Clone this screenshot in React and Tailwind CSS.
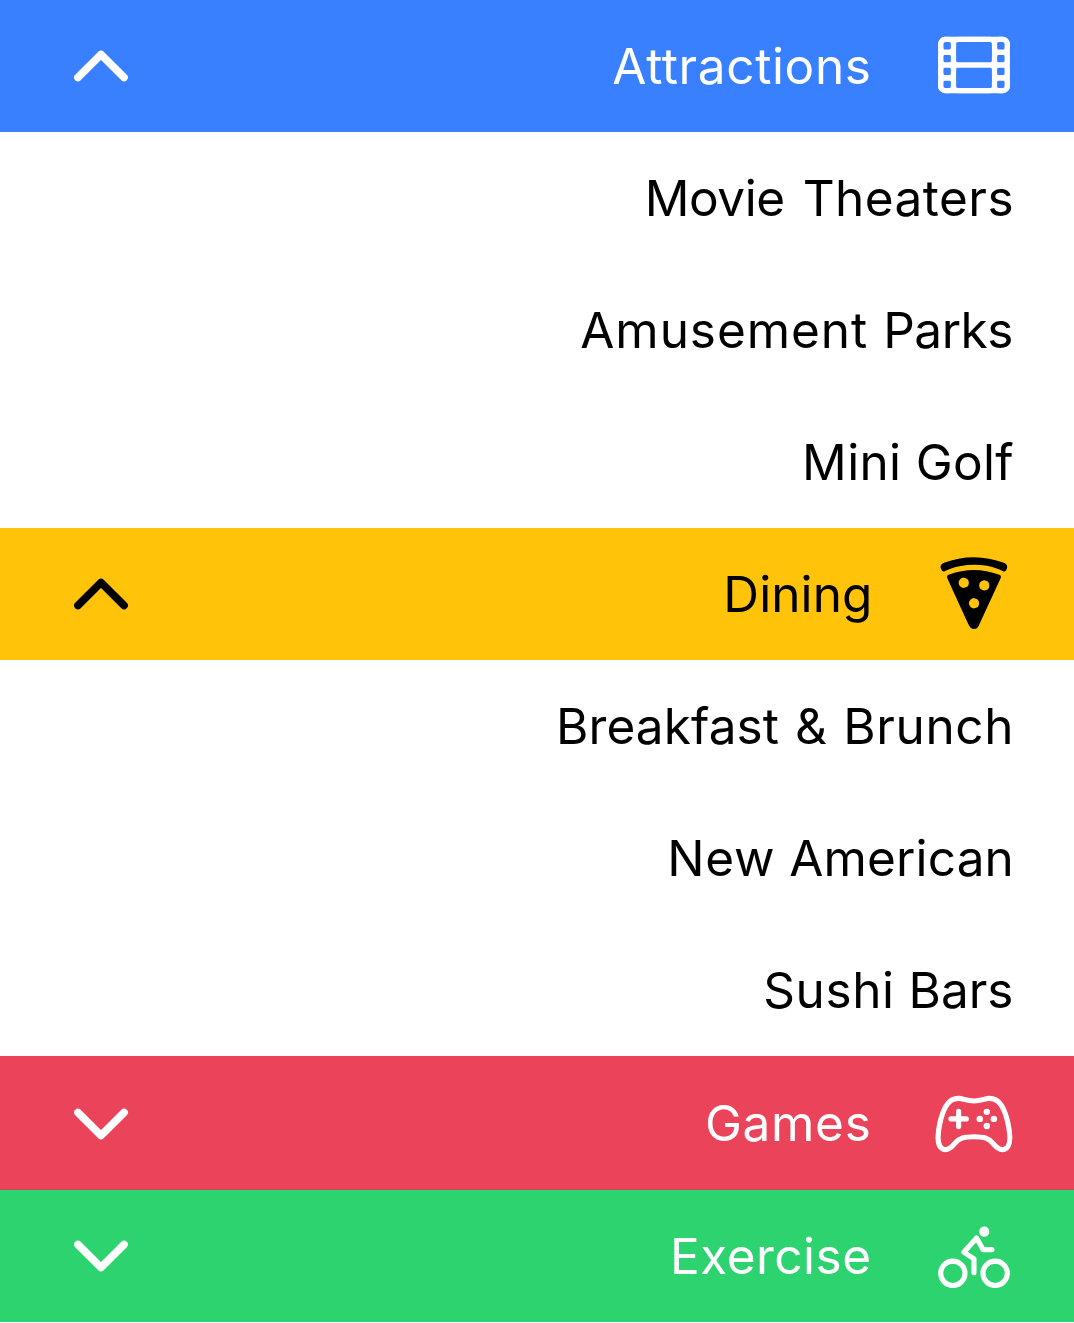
import { IoChevronUp, IoChevronDown, IoFilmOutline, IoPizza, IoGameControllerOutline, IoBicycleOutline } from "react-icons/io5";

function Header({ label, Icon, open, className, textClass, chevronClass = "", iconClass = "" }) {
  const Chevron = open ? IoChevronUp : IoChevronDown;
  return (
    <button type="button" aria-expanded={open} className={`flex w-full items-center pr-[59px] pl-[60px] ${className}`}>
      <Chevron className={`size-[82px] shrink-0 ${chevronClass}`} />
      <span className={`ml-auto whitespace-nowrap ${textClass}`}>{label}</span>
      <Icon className={`ml-[61.5px] size-[82px] shrink-0 ${iconClass}`} />
    </button>
  );
}

function Item({ children }) {
  return (
    <li className="flex h-[132px] items-center justify-end pr-[60px]">
      <span className="whitespace-nowrap">{children}</span>
    </li>
  );
}

export default function App() {
  return (
    <main className="h-[1323px] w-[1074px] bg-white font-['Inter',sans-serif] text-[49.5px] leading-[60px] text-black">
      <Header label="Attractions" Icon={IoFilmOutline} open className="h-[132px] bg-[#3880ff] text-white" textClass="tracking-[0.62px]" iconClass="mb-[2px]" />
      <ul>
        <Item>
          <span className="mr-[4px] tracking-[-0.4px]">Movie</span> <span className="tracking-[0.45px]">Theaters</span>
        </Item>
        <Item>
          <span className="mr-[1px] tracking-[0.95px]">Amusement</span> <span className="mr-[1px] tracking-[-0.45px]">Parks</span>
        </Item>
        <Item>
          <span className="tracking-[0.35px]">Mini Golf</span>
        </Item>
      </ul>
      <Header label="Dining" Icon={IoPizza} open className="h-[132px] bg-[#ffc409] text-black" textClass="-mr-px tracking-[0.1px]" iconClass="mb-[2px]" />
      <ul>
        <Item>
          <span className="mr-[2px] tracking-[0.1px]">Breakfast</span> <span className="mr-[2.5px]">&amp;</span>{" "}
          <span className="tracking-[0.6px]">Brunch</span>
        </Item>
        <Item>
          <span className="tracking-[0.8px]">New</span> <span className="tracking-[0.15px]">American</span>
        </Item>
        <Item>
          <span className="tracking-[0.6px]">Sushi</span> <span className="mr-[0.5px] tracking-[0px]">Bars</span>
        </Item>
      </ul>
      <Header label="Games" Icon={IoGameControllerOutline} open={false} className="h-[134px] border-b border-[#ca4c5b] bg-[#eb445a] pt-px text-white" textClass="tracking-[0.7px]" chevronClass="mt-[2px]" iconClass="mt-[1px]" />
      <Header label="Exercise" Icon={IoBicycleOutline} open={false} className="h-[132px] bg-[#2dd36f] text-white" textClass="tracking-[0.48px]" />
    </main>
  );
}
